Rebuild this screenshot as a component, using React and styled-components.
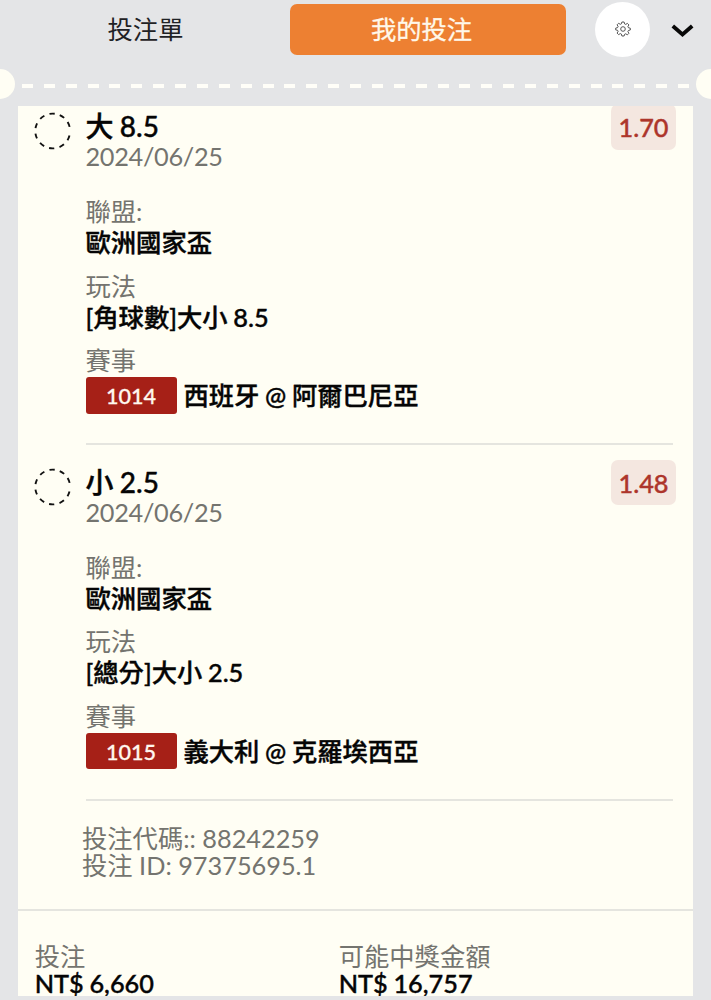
import React from "react";
import styled, { createGlobalStyle } from "styled-components";

const Global = createGlobalStyle`
  * { box-sizing: border-box; }
  body {
    margin: 0;
    background: #e4e5e7;
    color: #050505;
    font-family: Lato, "Noto Sans CJK TC", sans-serif;
    font-size: 25.3px;
    overflow: hidden;
  }
`;

const Page = styled.main`
  width: 711px;
  height: 1000px;
  overflow: hidden;
  display: flex;
  flex-direction: column;
`;

const Header = styled.header`
  height: 70px;
  flex: none;
  display: flex;
  align-items: flex-start;
`;

const Tab = styled.button`
  border: 0;
  padding: ${(p) => (p.$active ? "0 13px 0 0" : "0 0 0 1px")};
  font: inherit;
  line-height: 51px;
  height: 51px;
  margin-top: 4px;
  width: ${(p) => (p.$active ? 276 : 290)}px;
  border-radius: 7px;
  background: ${(p) => (p.$active ? "#ed8032" : "transparent")};
  color: ${(p) => (p.$active ? "#fff8ea" : "#1f2225")};
  -webkit-text-stroke: ${(p) => (p.$active ? "0.3px #fff8ea" : "0")};
`;

const Settings = styled.button`
  width: 55px;
  height: 55px;
  margin: 1.5px 0 0 29.4px;
  padding: 0;
  border: 0;
  border-radius: 50%;
  background: #fff;
  display: grid;
  place-items: center;
`;

const Collapse = styled.button`
  border: 0;
  padding: 0;
  background: none;
  margin: 23px 0 0 21px;
  height: 15px;
  line-height: 0;
`;

const Perforation = styled.div`
  height: 30px;
  margin: -1px -15px 7px;
  flex: none;
  display: flex;
  align-items: center;
  justify-content: space-between;
`;

const Notch = styled.span`
  width: 30px;
  height: 30px;
  flex: none;
  border-radius: 50%;
  background: #fffef4;
`;

const Dashes = styled.span`
  flex: 1;
  height: 4px;
  margin: 4px 7px 0 7px;
  background: repeating-linear-gradient(90deg, #fffef8 0 11px, transparent 11px 21.87px);
`;

const Card = styled.section`
  height: 890px;
  width: 675px;
  margin-left: 18px;
  flex: none;
  overflow: hidden;
  background: #fffef4;
`;

const Bet = styled.article`
  height: 355.6px;
  display: flex;
  align-items: flex-start;
  padding-left: 16px;
  padding-right: 17px;
  margin-top: ${(p) => (p.$first ? "-2px" : 0)};
`;

const Status = styled.svg`
  flex: none;
  margin-top: 8px;
`;

const Details = styled.div`
  width: 587px;
  margin-left: 13.5px;
  flex: none;
  height: 341px;
  border-bottom: 2px solid #e5e5df;
`;

const Summary = styled.div`
  height: 92px;
  display: flex;
  justify-content: space-between;
  margin-right: -3.5px;
`;

const Heading = styled.div`
  padding-top: 7px;
`;

const Emphasis = styled.div`
  font-weight: 500;
  -webkit-text-stroke: 0.4px currentColor;
  word-spacing: -0.7px;
`;

const Title = styled(Emphasis)`
  font-size: 28px;
  line-height: 31px;
`;

const Muted = styled.div`
  color: #74746f;
  line-height: ${(p) => p.$line || 31}px;
`;

const DateLine = styled(Muted)`
  line-height: 29px;
  letter-spacing: -0.3px;
`;

const Strong = styled(Emphasis)`
  line-height: ${(p) => p.$line || 31}px;
  white-space: nowrap;
`;

const Odds = styled.div`
  width: 65px;
  height: 45.5px;
  border-radius: 7px;
  background: #f4e7e0;
  color: #ad352b;
  font-weight: 500;
  -webkit-text-stroke: 0.4px currentColor;
  line-height: 46.5px;
  text-align: center;
`;

const Field = styled.div`
  height: 74.6px;
`;

const Match = styled.div`
  display: flex;
  align-items: center;
  gap: 7px;
  margin-top: 1.2px;
`;

const Tag = styled.span`
  width: 91px;
  height: 36.5px;
  border-radius: 3px;
  background: #a62017;
  color: #fff7ef;
  font-size: 21.6px;
  font-weight: 500;
  -webkit-text-stroke: 0.3px currentColor;
  line-height: 38px;
  text-align: center;
`;

const Codes = styled.div`
  height: 94px;
  padding: 9.5px 0 0 64px;
`;

const Totals = styled.footer`
  border-top: 2px solid #e5e5df;
  padding: 32px 0 0 16.7px;
  display: grid;
  grid-template-columns: 304px 1fr;
`;

const bets = [
  { pick: "大 8.5", odds: "1.70", market: "[角球數]大小 8.5", code: "1014", match: "西班牙 @ 阿爾巴尼亞" },
  { pick: "小 2.5", odds: "1.48", market: "[總分]大小 2.5", code: "1015", match: "義大利 @ 克羅埃西亞" },
];

function GearIcon() {
  return (
    <svg width="16" height="16" viewBox="0 0 16 16" fill="none" stroke="#444" strokeWidth="0.9" strokeLinejoin="round">
      <path d="M6.9 1h2.2l.5 1.9 1.1.5 1.7-1 1.5 1.5-1 1.7.5 1.1 1.9.5v1.8l-1.9.5-.5 1.1 1 1.7-1.5 1.5-1.7-1-1.1.5L9.1 15H6.9l-.5-1.9-1.1-.5-1.7 1-1.5-1.5 1-1.7-.5-1.1L.7 8.9V7.1l1.9-.5.5-1.1-1-1.7 1.5-1.5 1.7 1 1.1-.5Z" />
      <circle cx="8" cy="8" r="2.3" />
    </svg>
  );
}

// Ten dashes, with a wider gap where the ring closes on the right.
const ringDashes = `${"17 17.9 ".repeat(9)}17 28.9`;

function PendingIcon() {
  return (
    <Status width="38" height="38" viewBox="0 0 38 38">
      <circle
        cx="18.7"
        cy="19"
        r="17.4"
        fill="none"
        stroke="#111"
        strokeWidth="1.9"
        pathLength="360"
        strokeDasharray={ringDashes}
        transform="rotate(15 18.7 19)"
      />
    </Status>
  );
}

function BetItem({ bet, first }) {
  return (
    <Bet $first={first}>
      <PendingIcon />
      <Details>
        <Summary>
          <Heading>
            <Title>{bet.pick}</Title>
            <DateLine>2024/06/25</DateLine>
          </Heading>
          <Odds>{bet.odds}</Odds>
        </Summary>
        <Field>
          <Muted>聯盟:</Muted>
          <Strong>歐洲國家盃</Strong>
        </Field>
        <Field>
          <Muted>玩法</Muted>
          <Strong>{bet.market}</Strong>
        </Field>
        <Muted>賽事</Muted>
        <Match>
          <Tag>{bet.code}</Tag>
          <Strong $line={36.5}>{bet.match}</Strong>
        </Match>
      </Details>
    </Bet>
  );
}

export default function App() {
  return (
    <Page>
      <Global />
      <Header>
        <Tab>投注單</Tab>
        <Tab $active>我的投注</Tab>
        <Settings aria-label="設定"><GearIcon /></Settings>
        <Collapse aria-label="收合">
          <svg width="23" height="15" viewBox="0 0 23 15" fill="none" stroke="#080808" strokeWidth="3.8">
            <path d="M1.8 3 11.5 11.5 21.2 3" />
          </svg>
        </Collapse>
      </Header>
      <Perforation><Notch /><Dashes /><Notch /></Perforation>
      <Card>
        {bets.map((bet, i) => <BetItem key={bet.code} bet={bet} first={i === 0} />)}
        <Codes>
          <Muted $line={27.5}>投注代碼:: 88242259</Muted>
          <Muted $line={27.5}>投注 ID: 97375695.1</Muted>
        </Codes>
        <Totals>
          <div>
            <Muted $line={27}>投注</Muted>
            <Strong $line={27}>NT$ 6,660</Strong>
          </div>
          <div>
            <Muted $line={27}>可能中獎金額</Muted>
            <Strong $line={27}>NT$ 16,757</Strong>
          </div>
        </Totals>
      </Card>
    </Page>
  );
}
